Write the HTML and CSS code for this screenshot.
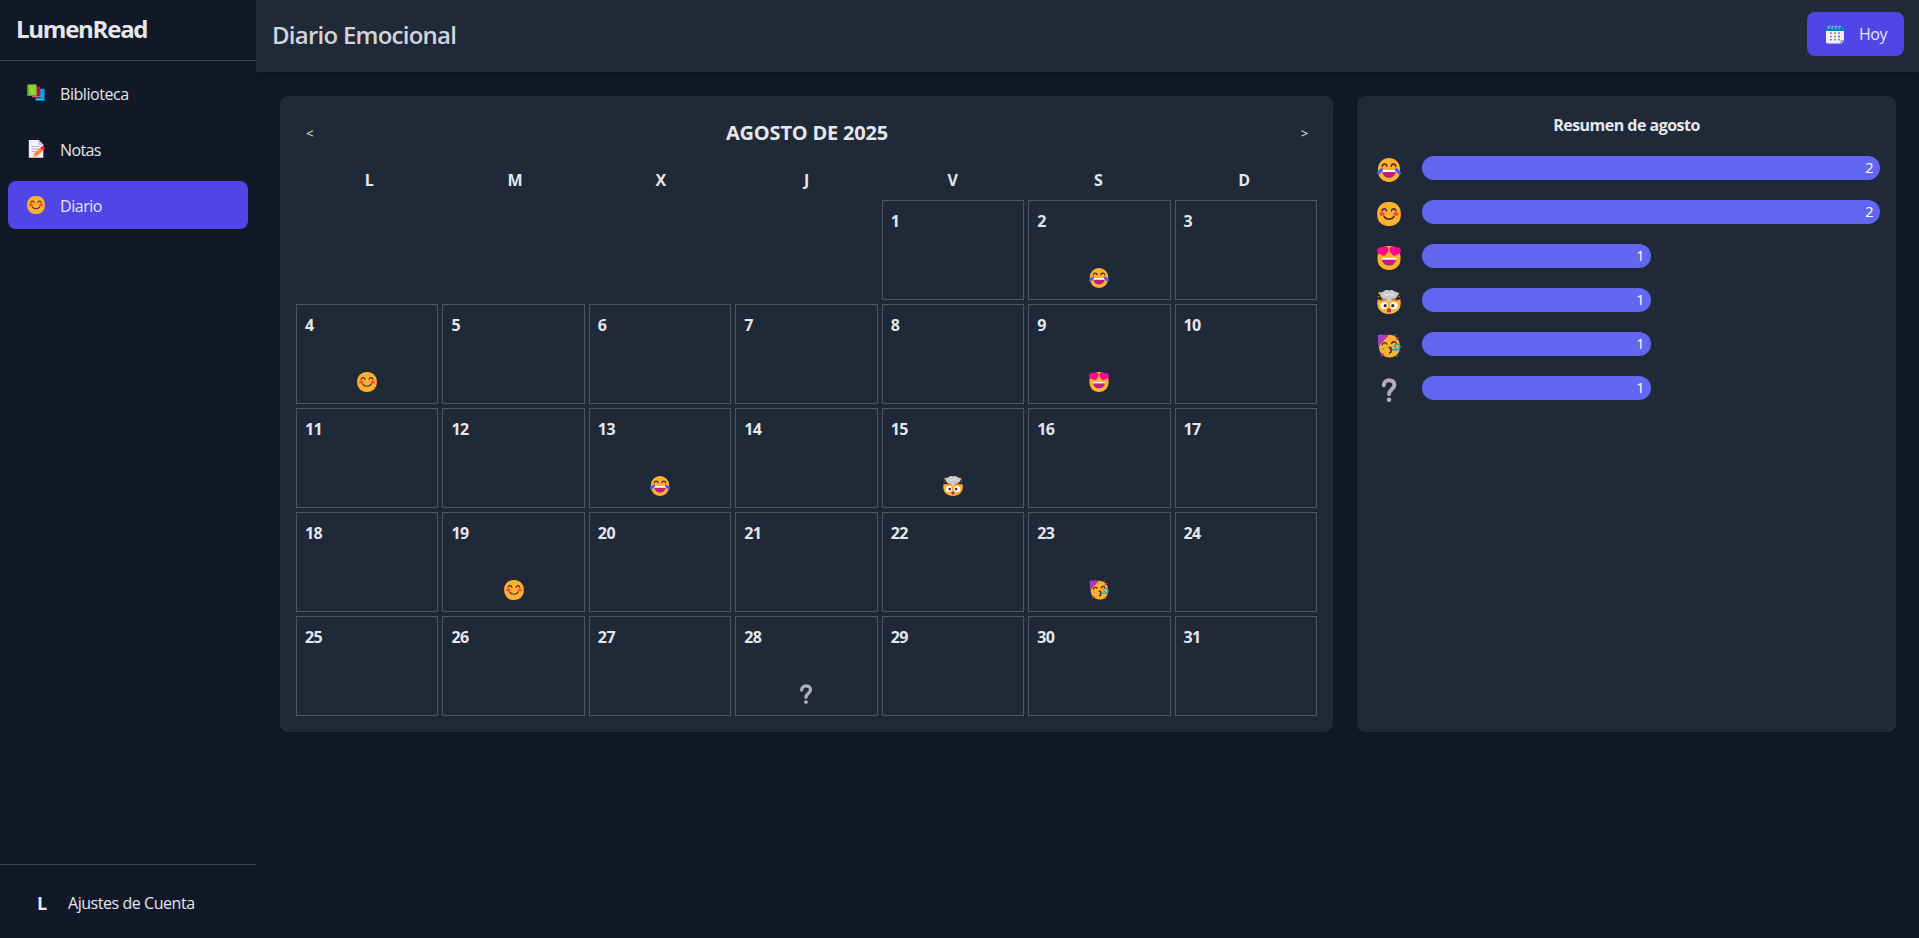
FILE: index.html
```html
<!DOCTYPE html>
<html lang="es">
<head>
<meta charset="utf-8">
<title>LumenRead</title>
<link rel="stylesheet" href="styles.css">
</head>
<body>
<svg width="0" height="0" class="defs" aria-hidden="true">
  <defs>
    <symbol id="joy" viewBox="0 0 24 24">
      <rect x="1" width="22" height="24" rx="10.8" fill="#ffb02e"/>
      <path d="M5.2 8.3C5.7 5.3 9.3 5.3 9.8 8.3M14.2 8.3C14.7 5.3 18.3 5.3 18.8 8.3" fill="none" stroke="#402a32" stroke-width="1.4" stroke-linecap="round"/>
      <path d="M5 12h14c0 4.6-3 7.8-7 7.8S5 16.600 5 12z" fill="#bb1d80"/>
      <path d="M5 12h14l-.2 2H5.200z" fill="#fff"/>
      <path d="M1.500 14.800L4.500 11.800M22.500 14.800l-3-3" stroke="#3f5fff" stroke-width="3.200" stroke-linecap="round"/>
    </symbol>
    <symbol id="smile" viewBox="0 0 24 24">
      <rect x=".2" width="23.600" height="24" rx="10.8" fill="#ffb02e"/>
      <ellipse cx="5" cy="12" rx="2.700" ry="1.900" fill="#ff4a3d"/>
      <ellipse cx="19" cy="12" rx="2.700" ry="1.900" fill="#ff4a3d"/>
      <path d="M5 9C5.500 6 9 6 9.500 9M14.500 9C15 6 18.500 6 19 9M7 14.500c2.200 3.400 7.800 3.400 10 0" fill="none" stroke="#402a32" stroke-width="1.4" stroke-linecap="round"/>
    </symbol>
    <symbol id="love" viewBox="0 0 24 24">
      <rect x=".5" width="23" height="24" rx="10.8" fill="#ffb02e"/>
      <path d="M5 12.500h14c0 4.300-2.800 7-7 7s-7-2.700-7-7z" fill="#bb1d80"/>
      <path d="M5 11.800h14v1.900H5z" fill="#fff"/>
      <path d="M7.200 10L1.600 7.700C-1.300 6 0 .9 3.700 1.200c1 0 1.700.4 2.200 1C7 0 11.300-.3 11.600 3.400 11.700 6.400 8.800 8.600 7.200 10z" fill="#ff0a8d"/>
      <path d="M16.800 10l5.600-2.300C25.300 6 24 .9 20.300 1.200c-1 0-1.700.4-2.200 1C17 0 12.700-.3 12.400 3.400c-.1 3 2.800 5.200 4.400 6.600z" fill="#ff0a8d"/>
    </symbol>
    <symbol id="mind" viewBox="0 0 24 24">
      <path d="M.8 9.500c3 1 5 0 6-1h10.400c1 1 3 2 6 1C25.500 18 20 24 12 24S-1.500 18 .8 9.500z" fill="#ffb02e"/>
      <circle cx="2.800" cy="3.300" r="1.200" fill="#ffb02e"/><circle cx="21" cy="3.600" r="1.200" fill="#ffb02e"/>
      <circle cx="1.400" cy="6.500" r=".6" fill="#ffb02e"/><circle cx="22.300" cy="6.700" r=".6" fill="#ffb02e"/>
      <path d="M3.300 5.500C2.500 3 5 1 7 1.500c1-2 3.500-2 5-1C14-.5 16.500-.2 17.200 1.500 20 1.200 21.500 3.500 20.700 6c-1.200 2.500-3.500 2.500-5 3L12 13 8.500 9C6.500 9 4 8.500 3.300 5.500z" fill="#c9c9c9"/>
      <path d="M7 4l3 1.500L13 4l4 1.500" fill="none" stroke="#eee" stroke-width="1"/>
      <path d="M4 10.800l5-1.500M20 10.800L15 9.300" stroke="#ff6723" stroke-width="1.500" stroke-linecap="round"/>
      <circle cx="7" cy="15.500" r="3.700" fill="#fff"/><circle cx="17" cy="15.500" r="3.700" fill="#fff"/>
      <circle cx="8.200" cy="15.700" r="1.600" fill="#402a32"/><circle cx="15.800" cy="15.700" r="1.600" fill="#402a32"/>
      <circle cx="12" cy="20.500" r="2" fill="#bb1d80"/>
    </symbol>
    <symbol id="party" viewBox="0 0 24 24">
      <path d="M4 7L11 1c6-1 12 4 12 11.500S18 23.500 12.500 23.500 2 19 2 13z" fill="#ffb02e"/>
      <path d="M.8 1C4 .5 9 .5 12 1L1.200 12.500z" fill="#8b4fd8"/>
      <path d="M1.500 5.800L6.500 1M1.500 9.800L10 1.500" stroke="#e0218a" stroke-width="1.300"/>
      <path d="M5.200 11C5.700 8.200 8.800 8 9.800 10M14.500 9.500c1-2.300 3.500-2.300 4.500-.5" fill="none" stroke="#402a32" stroke-width="1.400" stroke-linecap="round"/>
      <path d="M11.500 13.500c3.500-.5 3.500 2 1.500 2.500 2 .5 1.500 3-1 2.700" fill="none" stroke="#402a32" stroke-width="1.500"/>
      <path d="M14.500 15.800h5.500c4 0 3.500-5.800 0-5.800-3.500 0-2.800 4.300-.3 3.700" fill="none" stroke="#1ba0d8" stroke-width="1.500"/>
      <path d="M21.500 3.500l-2 2.500M4 22l2.500-2.500" stroke="#e0218a" stroke-width="1.800"/>
      <path d="M17.500.7h1.300M5.300 14.800h1.400M19 22h1.500" stroke="#1ba0d8" stroke-width="1.500"/>
    </symbol>
    <symbol id="ask" viewBox="0 0 24 24">
      <path d="M6.800 7.300C6.800.5 17.400.5 17.400 7c0 4.300-5.400 4.600-5.400 8.900" fill="none" stroke="#b4acbc" stroke-width="4" stroke-linecap="round"/>
      <circle cx="12" cy="21.700" r="2.300" fill="#b4acbc"/>
    </symbol>
    <symbol id="books" viewBox="0 0 19 18">
      <path d="M9 4.500h9.500V17H9z" fill="#00a6ed"/><path d="M9 15h9.500v2H9z" fill="#0074ba"/><path d="M9.500 15.300h9v.7h-9z" fill="#9bc8dd"/>
      <path d="M5 2h9v12H5z" fill="#ca0b4a"/><path d="M5 12h9v2H5z" fill="#990838"/><path d="M5.500 12.400h8.500v.7H5.500z" fill="#d7a0b3"/>
      <path d="M.3 0H10v12H.3z" fill="#86d72f"/><path d="M.3 0h1.400v12H.3zM.3 10.300H10V12H.3z" fill="#44911b"/><path d="M1.500 10.500H10v.7H1.500z" fill="#c1dfaa"/>
    </symbol>
    <symbol id="memo" viewBox="0 0 18 18">
      <path d="M1.800 0h10l4.500 4.500V17.800H1.800z" fill="#f3eef8"/><path d="M11.300 0l5 5h-5z" fill="#cdc4d6"/>
      <path d="M4.500 6.500h8M4.500 9h8M4.500 11.500h6" stroke="#b4acbc" stroke-width=".9"/>
      <path d="M6.500 14.200l6.800-6.400 2.500 2.700-6.800 6.200z" fill="#ff822d"/><path d="M6.500 14.200L9 16.700l-3.700.8z" fill="#ffce7c"/><path d="M13.300 7.800l1.300-1.200c1.500-1 4.300 1.300 2.700 2.700l-1.500 1.200z" fill="#f9234f"/>
    </symbol>
    <symbol id="calendar" viewBox="0 0 18 19">
      <path d="M0 5h18v10.500L15.500 18.500H1.800C.6 18.500 0 17.800 0 16.800z" fill="#f3eef8"/><path d="M18 15l-3.500 3.500v-2c0-1 .5-1.500 1.300-1.500z" fill="#998ea4"/>
      <path d="M0 6V3.500C0 2.500.6 2 1.600 2h14.800c1 0 1.600.5 1.600 1.500V6z" fill="#0084ce"/>
      <path d="M3 4C1 1 4 0 4.500 2M6.500 4C4.500 1 7.500 0 8 2M10 4C8 1 11 0 11.500 2M13.500 4c-2-3 1-4 1.500-2" fill="none" stroke="#c9c3d2" stroke-width=".9"/>
      <path d="M4 8.200h2M8 8.200h2M12 8.200h2M4 11.500h2M8 11.500h2M4 14.700h2M8 14.700h2M12 14.700h2" stroke="#998ea4" stroke-width="1.700"/>
      <path d="M12 11.500h2" stroke="#0084ce" stroke-width="1.700"/>
    </symbol>
  </defs>
</svg>
<div class="app">
  <aside class="sidebar">
    <h1 class="brand">LumenRead</h1>
    <nav class="nav">
      <a class="nav-item"><svg class="nav-icon"><use href="#books"/></svg><span>Biblioteca</span></a>
      <a class="nav-item notes"><svg class="nav-icon"><use href="#memo"/></svg><span>Notas</span></a>
      <a class="nav-item active"><svg class="nav-icon"><use href="#smile"/></svg><span>Diario</span></a>
    </nav>
    <div class="account"><b class="avatar">L</b><span>Ajustes de Cuenta</span></div>
  </aside>
  <div class="content">
    <header class="topbar">
      <h2 class="page-title">Diario Emocional</h2>
      <button class="today"><svg class="today-icon"><use href="#calendar"/></svg><span>Hoy</span></button>
    </header>
    <main class="main">
      <section class="panel calendar">
        <div class="month-bar"><button class="arrow">&lt;</button><h3 class="month">AGOSTO DE 2025</h3><button class="arrow">&gt;</button></div>
        <div class="weekdays"><span>L</span><span>M</span><span>X</span><span>J</span><span>V</span><span>S</span><span>D</span></div>
        <div class="days" id="days"></div>
      </section>
      <section class="panel summary">
        <h3 class="summary-title">Resumen de agosto</h3>
        <div class="rows" id="rows"></div>
      </section>
    </main>
  </div>
</div>
<script src="app.js"></script>
</body>
</html>
```
FILE: styles.css
```css
* { box-sizing: border-box; }
body { margin: 0; background: #111827; color: #e5e7eb; font: 16px/24px "Open Sans", "Noto Sans", sans-serif; letter-spacing: -0.45px; }
h1, h2, h3 { margin: 0; }
button { font: inherit; letter-spacing: inherit; color: inherit; border: 0; background: none; padding: 0; }
.defs { position: absolute; }
.app { display: flex; height: 938px; overflow: hidden; }
.sidebar { width: 256px; flex: none; display: flex; flex-direction: column; }
.brand { height: 61px; padding: 13px 16px; border-bottom: 1px solid #374151; font-size: 24px; line-height: 32px; font-weight: 700; letter-spacing: -1.25px; }
.nav { flex: 1; display: flex; flex-direction: column; gap: 8px; padding: 8px; }
.nav-item { display: flex; align-items: center; gap: 15px; height: 48px; padding: 0 19px; border-radius: 8px; }
.nav-icon { width: 18px; height: 18px; flex: none; }
.nav-item span { padding-top: 1px; }
.notes { letter-spacing: -0.6px; }
.active { background: #4f46e5; }
.account { display: flex; align-items: center; gap: 21px; height: 74px; padding: 3px 37px 0; border-top: 1px solid #374151; }
.avatar { font-size: 18px; width: 10px; }
.content { flex: 1; display: flex; flex-direction: column; min-width: 0; }
.topbar { display: flex; align-items: center; justify-content: space-between; height: 72px; padding: 0 15px 4px 16px; background: #1f2937; box-shadow: 0 4px 6px rgba(0, 0, 0, .15); }
.page-title { font-size: 24px; line-height: 32px; font-weight: 600; color: #d1d5db; letter-spacing: -0.75px; padding-top: 2px; }
.today { display: flex; align-items: center; gap: 15px; width: 97px; height: 44px; padding-left: 19px; border-radius: 8px; background: #4f46e5; }
.today-icon { width: 18px; height: 19px; }
.main { display: grid; grid-template-columns: 1fr 539px; gap: 24px; padding: 24px 23px 24px 24px; }
.panel { background: #1f2937; border-radius: 8px; padding: 16px; height: 636px; box-shadow: 0 4px 6px rgba(0, 0, 0, .1); }
.month-bar { display: flex; align-items: center; justify-content: space-between; height: 40px; padding: 2px 9px 0 10px; }
.month { font-size: 20px; font-weight: 700; line-height: 28px; letter-spacing: -0.2px; }
.arrow { font-size: 13.3px; }
.weekdays { display: grid; grid-template-columns: repeat(7, 1fr); height: 48px; padding-top: 16px; text-align: center; font-weight: 700; }
.days { display: grid; grid-template-columns: repeat(7, 1fr); grid-auto-rows: 100px; gap: 4px; }
.day { display: flex; flex-direction: column; justify-content: space-between; align-items: center; border: 1px solid #4b5563; padding: 8px 8px 11px; font-weight: 700; letter-spacing: -0.6px; }
.day-number { align-self: flex-start; }
.first { grid-column-start: 5; }
.mood { width: 20px; height: 20px; }
.summary-title { font-size: 16px; line-height: 24px; font-weight: 700; text-align: center; letter-spacing: -0.52px; position: relative; top: 1px; }
.rows { display: flex; flex-direction: column; gap: 20px; padding-top: 20px; }
.row { display: flex; align-items: center; height: 24px; gap: 21px; }
.row-mood { width: 24px; height: 24px; margin: 3px 0 0 4px; flex: none; }
.track { flex: 1; }
.bar { height: 24px; border-radius: 12px; background: #6366f1; color: #fff; font-size: 14.500px; text-align: right; padding-right: 7px; }
```
FILE: app.js
```js
const moods = { 2: 'joy', 4: 'smile', 9: 'love', 13: 'joy', 15: 'mind', 19: 'smile', 23: 'party', 28: 'ask' };
let days = '';
for (let d = 1; d <= 31; d++) {
  const icon = moods[d] ? `<svg class="mood"><use href="#${moods[d]}"/></svg>` : '';
  days += `<div class="day${d === 1 ? ' first' : ''}"><span class="day-number">${d}</span>${icon}</div>`;
}
document.getElementById('days').innerHTML = days;

const totals = [['joy', 2], ['smile', 2], ['love', 1], ['mind', 1], ['party', 1], ['ask', 1]];
document.getElementById('rows').innerHTML = totals.map(([name, n]) =>
  `<div class="row"><svg class="row-mood"><use href="#${name}"/></svg><div class="track"><div class="bar" style="width:${n * 50}%">${n}</div></div></div>`).join('');
```
